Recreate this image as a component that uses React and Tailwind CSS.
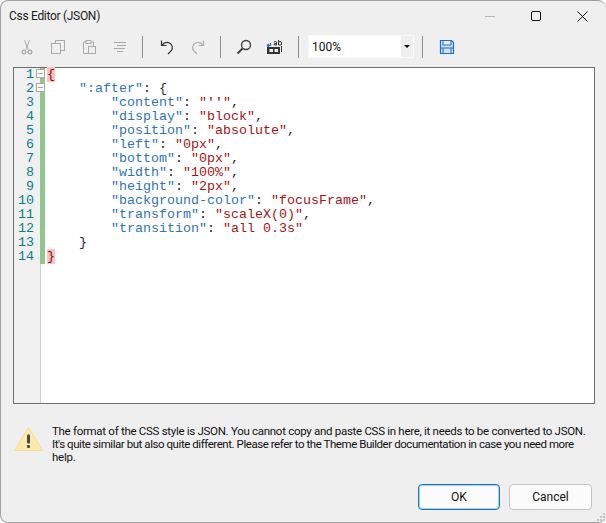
import React from 'react';

const LINES = [
  [['{', 'brace']],
  [['    ', ''], ['":after"', 'key'], [': ', 'plain'], ['{', 'plain']],
  [['        ', ''], ['"content"', 'key'], [': ', 'plain'], ['"\'\'"', 'val'], [',', 'plain']],
  [['        ', ''], ['"display"', 'key'], [': ', 'plain'], ['"block"', 'val'], [',', 'plain']],
  [['        ', ''], ['"position"', 'key'], [': ', 'plain'], ['"absolute"', 'val'], [',', 'plain']],
  [['        ', ''], ['"left"', 'key'], [': ', 'plain'], ['"0px"', 'val'], [',', 'plain']],
  [['        ', ''], ['"bottom"', 'key'], [': ', 'plain'], ['"0px"', 'val'], [',', 'plain']],
  [['        ', ''], ['"width"', 'key'], [': ', 'plain'], ['"100%"', 'val'], [',', 'plain']],
  [['        ', ''], ['"height"', 'key'], [': ', 'plain'], ['"2px"', 'val'], [',', 'plain']],
  [['        ', ''], ['"background-color"', 'key'], [': ', 'plain'], ['"focusFrame"', 'val'], [',', 'plain']],
  [['        ', ''], ['"transform"', 'key'], [': ', 'plain'], ['"scaleX(0)"', 'val'], [',', 'plain']],
  [['        ', ''], ['"transition"', 'key'], [': ', 'plain'], ['"all 0.3s"', 'val']],
  [['    ', ''], ['}', 'plain']],
  [['}', 'brace']],
];

const TOKEN = {
  key: 'text-[#2f74b5]',
  val: 'text-[#a31515]',
  plain: 'text-[#1a2a3a]',
  brace: 'text-[#7a1010] bg-[#ffc0c0]',
};

const Sep = () => <div className="w-px h-[22px] bg-[#8c8c8c]" />;

const Icon = ({ children, className = '' }) => (
  <svg width="16" height="16" viewBox="0 0 16 16" fill="none" className={className}>
    {children}
  </svg>
);

const GREY = '#a9a9a9';

const Cut = () => (
  <Icon>
    <path d="M5.500 1l3.500 9.500M10.500 1L7 10.500" stroke={GREY} />
    <circle cx="5" cy="13" r="2" stroke="#8f8f8f" />
    <circle cx="11" cy="13" r="2" stroke="#8f8f8f" />
  </Icon>
);
const Copy = () => (
  <Icon>
    <rect x="5.500" y="1.500" width="9" height="10" fill="#efefef" stroke={GREY} />
    <rect x="1.500" y="4.500" width="9" height="10" fill="#efefef" stroke={GREY} />
  </Icon>
);
const Paste = () => (
  <Icon>
    <path d="M5 3H2.500v11.500H7" stroke={GREY} />
    <path d="M10 3h2.500v4" stroke={GREY} />
    <rect x="5" y="1.500" width="5" height="3" stroke={GREY} />
    <rect x="7.500" y="7.500" width="7" height="7" fill="#efefef" stroke={GREY} />
  </Icon>
);
const Format = () => (
  <Icon>
    <path d="M2 3.500h12M5 6.500h9M2 9.500h11M5 12.500h6" stroke={GREY} />
  </Icon>
);
const Undo = ({ color = '#333333' }) => (
  <Icon>
    <path d="M2.500 1.500v5h5" stroke={color} strokeWidth="1.200" />
    <path d="M2.500 6.500C5 3.500 8 2.800 10.500 4c3 1.500 3.500 5 2 7.500L9 15" stroke={color} strokeWidth="1.200" />
  </Icon>
);
const Redo = () => (
  <Icon>
    <g transform="matrix(-1 0 0 1 16 0)">
      <path d="M2.500 1.500v5h5" stroke="#b0b0b0" strokeWidth="1.200" />
      <path d="M2.500 6.500C5 3.500 8 2.800 10.500 4c3 1.500 3.500 5 2 7.500L9 15" stroke="#b0b0b0" strokeWidth="1.200" />
    </g>
  </Icon>
);
const Search = () => (
  <Icon>
    <circle cx="10" cy="6" r="4.500" stroke="#3a3a3a" strokeWidth="1.300" />
    <path d="M6.500 9.500L1.500 14.500" stroke="#3a3a3a" strokeWidth="1.800" />
  </Icon>
);
const Replace = () => (
  <svg width="18" height="16" viewBox="0 0 18 16" fill="none">
    <path d="M1 6.500h3.500V4M1 6.500l2-1.500M1 6.500l2 1.500" stroke="#1f6fc4" strokeWidth="1.200" />
    <rect x="1.500" y="8.500" width="12" height="6" fill="#333333" stroke="#333333" />
    <path d="M15.500 7v6" stroke="#333333" />
    <rect x="3.500" y="10" width="3.500" height="3" fill="#efefef" />
    <rect x="8.500" y="10" width="3.500" height="3" fill="#efefef" />
    <path d="M8 3l1.500-.5 1 .5v3H8.500L8 5l2-.8M12.500 1v5h2.500l.5-1v-1.500l-.5-.8h-2.500" stroke="#333333" />
  </svg>
);
const Save = () => (
  <Icon>
    <path d="M1.500 1.500h11l2 2v11h-13z" fill="#cfe0f2" stroke="#1f6fc4" strokeWidth="1.200" />
    <rect x="4" y="1.500" width="8" height="4.500" fill="#efefef" stroke="#1f6fc4" />
    <path d="M1.500 9h13M4 9v5.500M12 9v5.500" stroke="#1f6fc4" />
  </Icon>
);

const Fold = () => (
  <div className="w-[9px] h-[9px] border border-[#a8a8a8] bg-white flex items-center justify-center">
    <div className="w-[5px] h-px bg-[#a8a8a8]" />
  </div>
);

const WarningIcon = () => (
  <svg width="29" height="24" viewBox="0 0 29 24">
    <path d="M14.500 .5L28.500 23.500H.5z" fill="#fde9a8" stroke="#f3dc9c" strokeLinejoin="round" />
    <rect x="13" y="7.500" width="3" height="9" rx="1" fill="#4a4a4a" />
    <rect x="13" y="18" width="3" height="3" rx="1" fill="#4a4a4a" />
  </svg>
);

const App = () => {
  return (
    <div className="w-[606px] h-[523px] bg-white overflow-hidden font-['Roboto','Liberation_Sans',sans-serif] text-[12px] text-black">
      <div className="relative w-full h-full flex flex-col bg-[#efefef] border border-[#a0a0a0] border-r-0 rounded-lg">
        {/* title bar */}
        <div className="h-[30px] flex items-center justify-between pl-2 pr-[1px] shrink-0">
          <span className="text-[12px] tracking-[-0.3px] text-[#1a1a1a]">Css Editor (JSON)</span>
          <div className="flex items-center">
            <div className="w-[46px] flex justify-center">
              <div className="w-[10px] h-px bg-[#b5b5b5]" />
            </div>
            <div className="w-[46px] flex justify-center">
              <div className="w-[10px] h-[10px] border border-[#111] rounded-[2px]" />
            </div>
            <div className="w-[46px] flex justify-center">
              <svg width="11" height="11" viewBox="0 0 11 11">
                <path d="M.5.500l10 10M10.500.500l-10 10" stroke="#111" />
              </svg>
            </div>
          </div>
        </div>

        {/* toolbar */}
        <div className="h-[31px] mb-[5px] shrink-0 flex items-center pl-[18px]">
          <div className="flex items-center gap-[15px]">
            <Cut />
            <Copy />
            <Paste />
            <Format />
          </div>
          <div className="ml-[14px]"><Sep /></div>
          <div className="flex items-center gap-[15px] ml-[16px]">
            <Undo />
            <Redo />
          </div>
          <div className="ml-[14px]"><Sep /></div>
          <div className="flex items-center gap-[14px] ml-[15px]">
            <Search />
            <Replace />
          </div>
          <div className="ml-[14px]"><Sep /></div>
          <div className="ml-[9px] w-[106px] h-[23px] shrink-0 bg-white border border-[#fafafa] flex items-center justify-between">
            <span className="pl-[3px] text-[12px] text-[#111]">100%</span>
            <div className="w-[12px] h-full bg-[#efefef] flex items-center justify-center">
              <div className="w-0 h-0 border-l-[3px] border-r-[3px] border-t-[3px] border-l-transparent border-r-transparent border-t-black" />
            </div>
          </div>
          <div className="ml-[8px]"><Sep /></div>
          <div className="ml-[16px]"><Save /></div>
        </div>

        {/* editor */}
        <div className="ml-3 mr-[11px] h-[337px] shrink-0 border border-[#6e6e6e] bg-white flex font-['Liberation_Mono',monospace] text-[13.33px] leading-[14px]">
          <div className="relative w-[26px] bg-[#f0f0f0] shrink-0">
            {LINES.map((_, i) => (
              <div key={i} className="h-[14px] text-right pr-[6px] text-[#0a7f86]">{i + 1}</div>
            ))}
            <div className="absolute left-[22px] top-[1px]"><Fold /></div>
            <div className="absolute left-[22px] top-[15px]"><Fold /></div>
          </div>
          <div className="w-[5px] shrink-0 border-l border-[#cfcfcf]">
            <div className="w-[5px] h-[196px] -ml-px bg-[#8fc78f]" />
          </div>
          <div className="pl-[2px] whitespace-pre flex-1">
            {LINES.map((line, i) => (
              <div key={i} className="h-[14px]">
                {line.map(([text, kind], j) => (
                  <span key={j} className={TOKEN[kind] || ''}>{text}</span>
                ))}
              </div>
            ))}
          </div>
        </div>

        {/* message */}
        <div className="flex items-start mt-[21px] pl-[13px] pr-3 shrink-0">
          <div className="w-[38px] pt-[2px] shrink-0"><WarningIcon /></div>
          <div className="text-[11.5px] leading-[13px] whitespace-nowrap text-[#111]">
            <div className="tracking-[-0.29px]">The format of the CSS style is JSON. You cannot copy and paste CSS in here, it needs to be converted to JSON.</div>
            <div className="tracking-[-0.44px]">It's quite similar but also quite different. Please refer to the Theme Builder documentation in case you need more</div>
            <div className="tracking-[-0.26px]">help.</div>
          </div>
        </div>

        {/* buttons */}
        <div className="flex-1 flex items-end justify-end gap-[9px] pr-[14px] pb-[12px]">
          <button className="w-[82px] h-[26px] rounded-[4px] border border-[#1b76bd] shadow-[inset_0_0_0_1px_#a9cfe9] bg-[#fbfbfb] text-[12px] text-[#111]">OK</button>
          <button className="w-[83px] h-[26px] rounded-[4px] border border-[#c4c4c4] bg-[#fbfbfb] text-[12px] text-[#111]">Cancel</button>
        </div>

        {/* resize grip */}
        <div className="absolute right-[1px] bottom-[1px] grid grid-cols-3 gap-px">
          <span className="w-[2px] h-[2px]" />
          <span className="w-[2px] h-[2px]" />
          <span className="w-[2px] h-[2px] bg-[#c6c6c6]" />
          <span className="w-[2px] h-[2px]" />
          <span className="w-[2px] h-[2px] bg-[#c6c6c6]" />
          <span className="w-[2px] h-[2px] bg-[#c6c6c6]" />
          <span className="w-[2px] h-[2px] bg-[#c6c6c6]" />
          <span className="w-[2px] h-[2px] bg-[#c6c6c6]" />
          <span className="w-[2px] h-[2px] bg-[#c6c6c6]" />
        </div>
      </div>
    </div>
  );
};

export default App;
